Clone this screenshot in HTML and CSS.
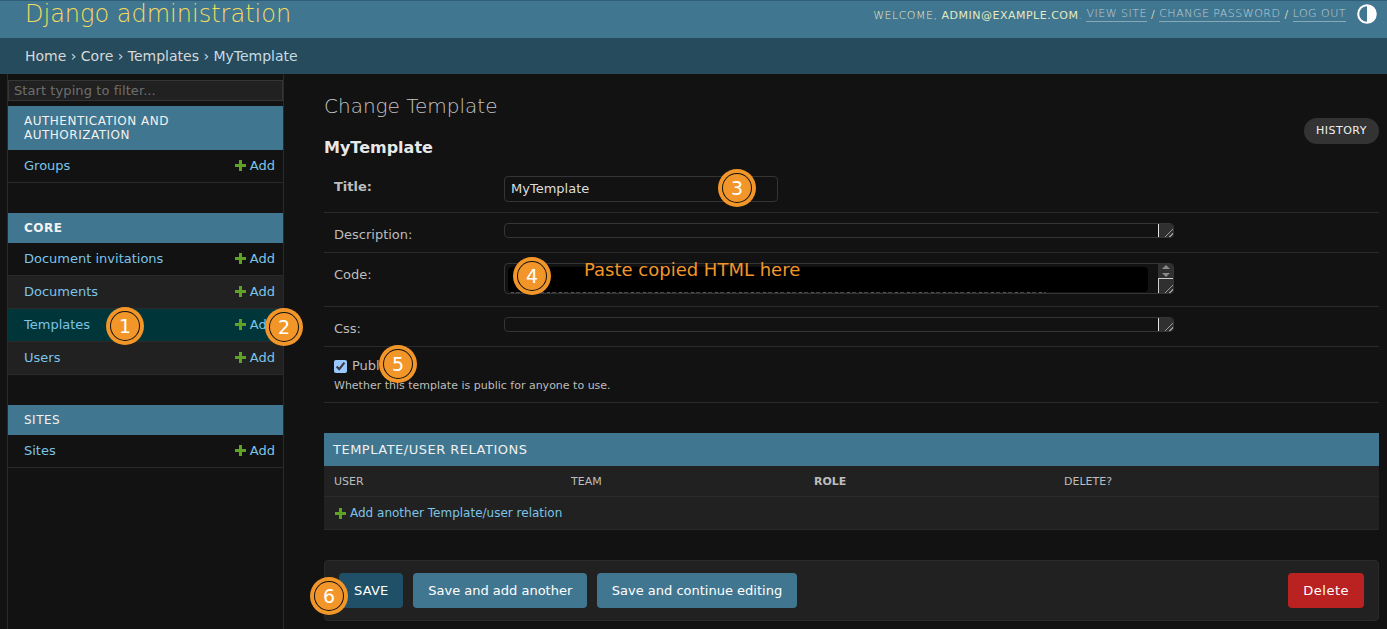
FILE: index.html
```html
<!DOCTYPE html>
<html lang="en">
<head>
    <meta charset="UTF-8">
    <meta name="viewport" content="width=device-width, initial-scale=1.0">
    <title>Change Template | Django site admin</title>
    <link rel="stylesheet" href="styles.css">
</head>
<body>
    <header class="site-header">
        <div class="branding">Django administration</div>
        <div class="user-tools">
            <span>Welcome, <strong>admin@example.com</strong>.</span>
            <a href="#">View site</a> /
            <a href="#">Change password</a> /
            <a href="#">Log out</a>
            <svg class="theme-icon" width="20" height="20" viewBox="0 0 20 20">
                <circle cx="10" cy="10" r="8.8" fill="none" stroke="#fff" stroke-width="2"/>
                <path d="M10 1.2a8.8 8.8 0 0 1 0 17.6z" fill="#fff"/>
            </svg>
        </div>
    </header>

    <nav class="breadcrumbs">
        <a href="#">Home</a> › <a href="#">Core</a> › <a href="#">Templates</a> › MyTemplate
    </nav>

    <div class="page">
        <aside class="sidebar">
            <input class="nav-filter" type="text" placeholder="Start typing to filter...">

            <section class="app-module">
                <h2 class="app-caption">Authentication and Authorization</h2>
                <div class="model-row"><a href="#">Groups</a><a class="add-link" href="#"><span class="plus"></span>Add</a></div>
            </section>

            <section class="app-module">
                <h2 class="app-caption app-caption-current">Core</h2>
                <div class="model-row"><a href="#">Document invitations</a><a class="add-link" href="#"><span class="plus"></span>Add</a></div>
                <div class="model-row model-row-alt"><a href="#">Documents</a><a class="add-link" href="#"><span class="plus"></span>Add</a></div>
                <div class="model-row model-row-current"><a href="#">Templates</a><a class="add-link" href="#"><span class="plus"></span>Add</a></div>
                <div class="model-row model-row-alt"><a href="#">Users</a><a class="add-link" href="#"><span class="plus"></span>Add</a></div>
            </section>

            <section class="app-module">
                <h2 class="app-caption">Sites</h2>
                <div class="model-row"><a href="#">Sites</a><a class="add-link" href="#"><span class="plus"></span>Add</a></div>
            </section>
        </aside>

        <main class="content">
            <div class="title-row">
                <h1 class="page-title">Change Template</h1>
                <a class="history-btn" href="#">History</a>
            </div>
            <h2 class="object-name">MyTemplate</h2>

            <form>
                <div class="form-row form-row-title">
                    <label class="field-label field-label-required" for="title">Title:</label>
                    <input class="text-input" id="title" type="text" value="MyTemplate">
                </div>
                <div class="form-row form-row-short">
                    <span class="field-label">Description:</span>
                    <div class="fake-textarea">
                        <div class="textarea-gutter"><span class="grip"></span></div>
                    </div>
                </div>
                <div class="form-row form-row-code">
                    <span class="field-label">Code:</span>
                    <div class="fake-textarea fake-textarea-code">
                        <div class="code-peek"></div>
                        <div class="redacted"></div>
                        <div class="textarea-gutter gutter-scroll">
                            <span class="arrow-up"></span>
                            <span class="arrow-down"></span>
                            <span class="grip grip-boxed"></span>
                        </div>
                    </div>
                </div>
                <div class="form-row form-row-short">
                    <span class="field-label">Css:</span>
                    <div class="fake-textarea">
                        <div class="textarea-gutter"><span class="grip"></span></div>
                    </div>
                </div>
                <div class="form-row form-row-check">
                    <div class="check-line">
                        <input id="public" type="checkbox" checked>
                        <label for="public">Public</label>
                    </div>
                    <p class="help">Whether this template is public for anyone to use.</p>
                </div>

                <section class="inline-group">
                    <h2 class="inline-caption">Template/user relations</h2>
                    <div class="inline-head">
                        <span class="col-user">User</span>
                        <span class="col-team">Team</span>
                        <span class="col-role">Role</span>
                        <span>Delete?</span>
                    </div>
                    <div class="inline-add"><span class="plus"></span><a href="#">Add another Template/user relation</a></div>
                </section>

                <div class="submit-row">
                    <button class="btn btn-default" type="button">Save</button>
                    <button class="btn" type="button">Save and add another</button>
                    <button class="btn" type="button">Save and continue editing</button>
                    <a class="btn btn-delete" href="#">Delete</a>
                </div>
            </form>
        </main>
    </div>

    <!-- numbered callouts drawn over the screenshot -->
    <span class="callout callout-1">1</span>
    <span class="callout callout-2">2</span>
    <span class="callout callout-3">3</span>
    <span class="callout callout-4">4</span>
    <span class="callout callout-5">5</span>
    <span class="callout callout-6">6</span>
    <span class="paste-note">Paste copied HTML here</span>
</body>
</html>
```

FILE: styles.css
```css
* {
    box-sizing: border-box;
}
html, body {
    height: 629px;
    overflow: hidden;
}
body {
    margin: 0;
    background: #121212;
    color: #eee;
    font-family: "DejaVu Sans", sans-serif;
    font-size: 13px;
    position: relative;
}
a {
    color: #7cc4e8;
    text-decoration: none;
}
h1, h2, p {
    margin: 0;
    font-weight: 400;
}

/* header */
.site-header {
    height: 38px;
    background: #417690;
    border-top: 1px solid #2f5f77;
    display: flex;
    justify-content: space-between;
    padding: 0 10px 0 25px;
}
.branding {
    color: #f5dd5d;
    font-size: 24px;
    font-weight: 300;
    line-height: 26px;
}
.user-tools {
    display: flex;
    gap: 4px;
    height: 26px;
    align-items: center;
    color: #ffc;
    font-size: 11px;
    letter-spacing: 0.5px;
    text-transform: uppercase;
    font-weight: 300;
}
.user-tools span {
    opacity: 0.85;
    margin-top: 2px;
}
.user-tools strong {
    font-weight: 400;
}
.user-tools a {
    color: #fff;
    opacity: 0.62;
    border-bottom: 1px solid rgba(255, 255, 255, 0.6);
    line-height: 14px;
}
.theme-icon {
    margin-left: 7px;
}
.breadcrumbs {
    height: 36px;
    background: #264b5d;
    padding: 0 25px;
    color: #c4dce8;
    font-size: 14px;
    line-height: 36px;
}
.breadcrumbs a {
    color: #d8d8d8;
}

/* layout */
.page {
    display: flex;
    height: 555px;
}
.sidebar {
    width: 277px;
    margin-left: 7px;
    flex: none;
    padding-top: 6px;
    border-left: 1px solid #2a2a2a;
    border-right: 1px solid #2a2a2a;
}
.nav-filter {
    display: block;
    width: 100%;
    height: 21px;
    margin-bottom: 5px;
    padding: 0 5px;
    background: #212121;
    border: 1px solid #353535;
    color: #eee;
    font: 13px "DejaVu Sans", sans-serif;
    letter-spacing: 0.08px;
}
.nav-filter::placeholder {
    color: #6f6f6f;
}
.app-module {
    margin-bottom: 30px;
}
.app-caption {
    background: #417690;
    color: #f2f2f2;
    font-size: 12px;
    line-height: 14px;
    letter-spacing: 0.5px;
    text-transform: uppercase;
    padding: 8px 16px;
}
.app-caption-current {
    font-weight: 700;
}
.model-row {
    height: 33px;
    display: flex;
    justify-content: space-between;
    align-items: center;
    padding: 0 8px 2px 16px;
    border-bottom: 1px solid #2a2a2a;
}
.model-row-alt {
    background: #212121;
}
.model-row-current {
    background: #00363a;
}
.add-link {
    display: flex;
    align-items: center;
    gap: 4px;
}
.plus {
    display: inline-block;
    width: 11px;
    height: 11px;
    background:
        linear-gradient(#5fa225, #5fa225) center / 11px 3px no-repeat,
        linear-gradient(#5fa225, #5fa225) center / 3px 11px no-repeat;
}

/* main column */
.content {
    flex: 1;
    padding: 21px 8px 0 40px;
}
.title-row {
    display: flex;
    justify-content: space-between;
    align-items: flex-start;
    height: 43px;
}
.page-title {
    font-size: 20px;
    font-weight: 300;
    line-height: 22px;
    color: #c4c4c4;
}
.history-btn {
    margin-top: 23px;
    background: #333;
    color: #f0f0f0;
    font-size: 11px;
    line-height: 26px;
    height: 26px;
    padding: 0 12px;
    border-radius: 15px;
    letter-spacing: 0.5px;
    text-transform: uppercase;
}
.object-name {
    font-size: 16px;
    font-weight: 700;
    line-height: 20px;
    color: #e8e8e8;
}

/* form rows */
.form-row {
    display: flex;
    padding: 0 5px 0 10px;
    border-bottom: 1px solid #2a2a2a;
}
.form-row-title {
    height: 55px;
    padding-top: 18px;
}
.form-row-short {
    height: 40px;
    padding-top: 10px;
}
.form-row-code {
    height: 54px;
    padding-top: 10px;
}
.field-label {
    width: 170px;
    flex: none;
    padding-top: 4px;
    color: #bdbdbd;
    line-height: 15px;
}
.form-row-title .field-label {
    padding-top: 3px;
}
.field-label-required {
    font-weight: 700;
}
.text-input {
    width: 274px;
    height: 26px;
    padding: 0 6px 2px;
    background: #121212;
    border: 1px solid #353535;
    border-radius: 4px;
    color: #ddd;
    font: 13px "DejaVu Sans", sans-serif;
}
.fake-textarea {
    width: 670px;
    height: 15px;
    border: 1px solid #353535;
    border-radius: 4px;
    background: #121212;
    display: flex;
    justify-content: flex-end;
    overflow: hidden;
    position: relative;
}
.fake-textarea-code {
    height: 31px;
}
.textarea-gutter {
    width: 15px;
    background: #303030;
    border-left: 1px solid #e2e2e2;
    display: flex;
    flex-direction: column;
    justify-content: flex-end;
    align-items: flex-end;
}
.gutter-scroll {
    border-left: 0;
    align-items: center;
    justify-content: flex-start;
    padding-top: 1px;
}
.grip {
    width: 14px;
    height: 13px;
    background: linear-gradient(135deg, transparent 68%, #999 68%, #999 74%, transparent 74%, transparent 84%, #999 84%, #999 90%, transparent 90%);
}
.grip-boxed {
    width: 15px;
    height: 15px;
    margin-top: auto;
    border-left: 1px solid #ccc;
    border-top: 1px solid #ccc;
}
.arrow-up {
    width: 0;
    border: 4px solid transparent;
    border-top: 0;
    border-bottom: 4px solid #8a8a8a;
}
.arrow-down {
    width: 0;
    margin-top: 4px;
    border: 4px solid transparent;
    border-bottom: 0;
    border-top: 4px solid #8a8a8a;
}
.redacted {
    position: absolute;
    left: 3px;
    right: 25px;
    top: 3px;
    height: 25px;
    background: #000;
    border-radius: 4px;
}
/* bottom edge of the code text, showing under the black-out */
.code-peek {
    position: absolute;
    left: 6px;
    width: 535px;
    bottom: 0;
    height: 2px;
    background: repeating-linear-gradient(90deg, #555 0 3px, transparent 3px 5px, #444 5px 9px, transparent 9px 12px);
}
.form-row-check {
    display: block;
    height: 56px;
    padding-top: 12px;
}
.check-line {
    display: flex;
    align-items: center;
    gap: 5px;
    color: #bdbdbd;
    height: 15px;
}
.check-line label {
    padding-bottom: 2px;
}
.check-line input {
    color-scheme: dark;
    width: 13px;
    height: 13px;
    margin: 0;
}
.help {
    margin-top: 4px;
    font-size: 11px;
    line-height: 16px;
    color: #bdbdbd;
}

/* inline table */
.inline-group {
    margin-top: 30px;
    background: #212121;
    border-bottom: 1px solid #2a2a2a;
}
.inline-caption {
    background: #417690;
    color: #f0f0f0;
    font-size: 13px;
    line-height: 33px;
    letter-spacing: 0.5px;
    padding-left: 9px;
    text-transform: uppercase;
}
.inline-head {
    display: flex;
    height: 31px;
    align-items: center;
    padding-left: 10px;
    border-bottom: 1px solid #2a2a2a;
    color: #bdbdbd;
    font-size: 11px;
    text-transform: uppercase;
}
.col-user {
    width: 237px;
}
.col-team {
    width: 243px;
}
.col-role {
    width: 250px;
    font-weight: 700;
}
.inline-add {
    height: 32px;
    display: flex;
    align-items: center;
    gap: 4px;
    padding-left: 11px;
    font-size: 12px;
}

/* buttons */
.submit-row {
    margin-top: 30px;
    height: 61px;
    display: flex;
    align-items: center;
    gap: 10px;
    padding: 0 14px;
    background: #212121;
    border: 1px solid #2a2a2a;
    border-radius: 4px;
}
.btn {
    height: 35px;
    padding: 0 14.75px;
    background: #417690;
    color: #fff;
    border: 0;
    border-radius: 4px;
    font: 13px/35px "DejaVu Sans", sans-serif;
}
.btn-default {
    background: #205067;
    padding: 0 15px;
    text-transform: uppercase;
    letter-spacing: 0.2px;
}
.btn-delete {
    margin-left: auto;
    padding: 0 15px;
    background: #ba2121;
    letter-spacing: 0.5px;
}

/* annotations */
.callout {
    position: absolute;
    width: 28px;
    height: 28px;
    border-radius: 50%;
    background: #f2962a;
    color: #fff;
    font-size: 19px;
    line-height: 28px;
    text-align: center;
    box-shadow: 0 0 0 1px #111, 0 0 0 5px #f2962a;
}
.callout-1 { left: 111px; top: 312px; }
.callout-2 { left: 270px; top: 313px; }
.callout-3 { left: 723px; top: 174px; }
.callout-4 { left: 518px; top: 262px; }
.callout-5 { left: 384px; top: 350px; }
.callout-6 { left: 315px; top: 582px; }
.paste-note {
    position: absolute;
    left: 584px;
    top: 259px;
    color: #f2962a;
    font-size: 18px;
    line-height: 22px;
}
```
